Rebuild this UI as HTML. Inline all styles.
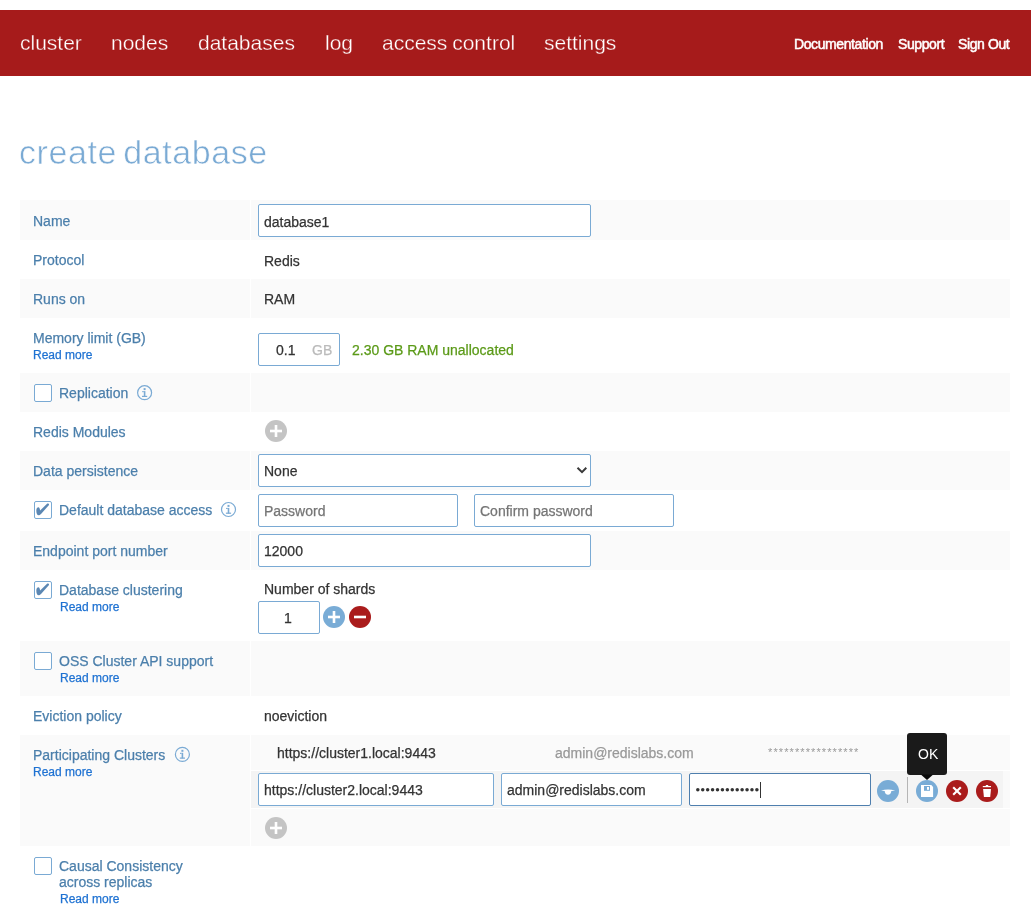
<!DOCTYPE html>
<html><head><meta charset="utf-8">
<style>
*{margin:0;padding:0;box-sizing:border-box}
html,body{width:1031px;height:905px;overflow:hidden;background:#fff;font-family:"Liberation Sans",sans-serif}
.a,.nav,.rnav,.title,.lb,.rm,.vt{will-change:transform}
.lb,.vt,.rm{-webkit-text-stroke:0.25px currentColor}
.a{position:absolute;white-space:nowrap}
.hdr{position:absolute;left:0;top:10px;width:1031px;height:66px;background:#a61b1b}
.nav{position:absolute;top:32px;font-size:21px;line-height:21px;color:#fff;-webkit-text-stroke:0.3px #a61b1b}
.rnav{position:absolute;top:37px;font-size:14px;line-height:14px;color:#fff;letter-spacing:-0.4px;-webkit-text-stroke:0.5px #fff}
.title{position:absolute;left:18.5px;top:134.5px;font-size:34px;line-height:34px;color:#7aaad4;letter-spacing:0.6px;word-spacing:-4px;-webkit-text-stroke:0.6px #fff}
.row{position:absolute;left:20px;width:990px}
.g{background:#fafafa}
.g:after{content:"";position:absolute;left:230px;top:0;bottom:0;width:1px;background:#fff}
.lb{position:absolute;font-size:14px;line-height:14px;color:#4b7fab}
.rm{position:absolute;font-size:12px;line-height:12px;color:#1f72d2}
.vt{position:absolute;font-size:14px;line-height:14px;color:#333}
.inp{position:absolute;background:#fff;border:1px solid #7aaad4;border-radius:2px}
.cb{position:absolute;left:34px;width:18px;height:18px;border:1px solid #7aaad4;border-radius:2px;background:#fff}
svg{position:absolute;overflow:visible}
</style></head><body>
<div class="hdr"></div>
<div class="nav" style="left:20px">cluster</div>
<div class="nav" style="left:111px">nodes</div>
<div class="nav" style="left:198px">databases</div>
<div class="nav" style="left:325px">log</div>
<div class="nav" style="left:382px;word-spacing:-1px">access control</div>
<div class="nav" style="left:544px">settings</div>
<div class="rnav" style="left:794px">Documentation</div>
<div class="rnav" style="left:898px">Support</div>
<div class="rnav" style="left:958px">Sign Out</div>

<div class="title">create database</div>

<!-- rows -->
<div class="row g" style="top:200px;height:40px"></div>
<div class="row g" style="top:279px;height:39px"></div>
<div class="row g" style="top:373px;height:39px"></div>
<div class="row g" style="top:451px;height:39px"></div>
<div class="row g" style="top:531px;height:39px"></div>
<div class="row g" style="top:641px;height:55px"></div>
<div class="row g" style="top:735px;height:111px"></div>

<!-- labels: top = baseline - 12 -->
<div class="a lb" style="left:33px;top:214px">Name</div>
<div class="a lb" style="left:33px;top:253px">Protocol</div>
<div class="a lb" style="left:33px;top:292px">Runs on</div>
<div class="a lb" style="left:33px;top:331px">Memory limit (GB)</div>
<div class="a rm" style="left:33px;top:349px">Read more</div>
<div class="cb" style="top:384px"></div>
<div class="a lb" style="left:59px;top:386px">Replication</div>
<div class="a lb" style="left:33px;top:425px">Redis Modules</div>
<div class="a lb" style="left:33px;top:464px">Data persistence</div>
<div class="cb" style="top:501px"></div>
<div class="a lb" style="left:59px;top:503px">Default database access</div>
<div class="a lb" style="left:33px;top:544px">Endpoint port number</div>
<div class="cb" style="top:581px"></div>
<div class="a lb" style="left:59px;top:583px">Database clustering</div>
<div class="a rm" style="left:60px;top:601px">Read more</div>
<div class="cb" style="top:652px"></div>
<div class="a lb" style="left:59px;top:654px">OSS Cluster API support</div>
<div class="a rm" style="left:60px;top:672px">Read more</div>
<div class="a lb" style="left:33px;top:709px">Eviction policy</div>
<div class="a lb" style="left:33px;top:748px">Participating Clusters</div>
<div class="a rm" style="left:33px;top:766px">Read more</div>
<div class="cb" style="top:857px"></div>
<div class="a lb" style="left:59px;top:858px;line-height:16px;white-space:normal;width:150px">Causal Consistency<br>across replicas</div>
<div class="a rm" style="left:60px;top:893px">Read more</div>

<!-- values -->
<div class="inp" style="left:258px;top:204px;width:333px;height:33px"></div>
<div class="a vt" style="left:264px;top:215px">database1</div>
<div class="a vt" style="left:264px;top:254px">Redis</div>
<div class="a vt" style="left:264px;top:292px">RAM</div>
<div class="inp" style="left:258px;top:333px;width:82px;height:33px"></div>
<div class="a vt" style="left:276px;top:343px">0.1</div>
<div class="a vt" style="left:312px;top:343px;color:#bbb">GB</div>
<div class="a vt" style="left:352px;top:343px;color:#5b9a18">2.30 GB RAM unallocated</div>

<div class="inp" style="left:258px;top:454px;width:333px;height:33px"></div>
<div class="a vt" style="left:264px;top:464px">None</div>
<div class="inp" style="left:258px;top:494px;width:200px;height:33px"></div>
<div class="a vt" style="left:264px;top:504px;color:#757575">Password</div>
<div class="inp" style="left:474px;top:494px;width:200px;height:33px"></div>
<div class="a vt" style="left:480px;top:504px;color:#757575">Confirm password</div>
<div class="inp" style="left:258px;top:534px;width:333px;height:33px"></div>
<div class="a vt" style="left:264px;top:544px">12000</div>

<div class="a vt" style="left:264px;top:582px">Number of shards</div>
<div class="inp" style="left:258px;top:601px;width:62px;height:33px"></div>
<div class="a vt" style="left:284px;top:611px">1</div>

<div class="a vt" style="left:264px;top:709px">noeviction</div>

<div class="a vt" style="left:277px;top:746px">https://cluster1.local:9443</div>
<div class="a vt" style="left:555px;top:746px;color:#999">admin@redislabs.com</div>
<div class="a vt" style="left:768px;top:745px;color:#999;font-size:11px;letter-spacing:1.1px;-webkit-text-stroke:0">*****************</div>
<div class="a" style="left:251px;top:770px;width:759px;height:1px;background:#fff"></div><div class="a" style="left:251px;top:771px;width:752px;height:37px;background:#f4f4f4"></div><div class="a" style="left:251px;top:808px;width:759px;height:1px;background:#fff"></div>
<div class="inp" style="left:258px;top:773px;width:236px;height:33px"></div>
<div class="a vt" style="left:264px;top:783px">https://cluster2.local:9443</div>
<div class="inp" style="left:501px;top:773px;width:181px;height:33px"></div>
<div class="a vt" style="left:507px;top:783px">admin@redislabs.com</div>
<div class="inp" style="left:689px;top:773px;width:182px;height:33px;border-color:#4f7fae"></div>

<svg width="1031" height="905" viewBox="0 0 1031 905" style="left:0;top:0">
<g fill="#5b87b3">
<path transform="translate(34,501)" d="M2.3 9.5 C2.3 7.2 3.5 6.2 4.4 6.2 C5.4 6.2 5.9 7.5 6.1 9.6 L12.8 3 C13.8 2.1 15.3 2.6 15 4.1 L7 13 C6.1 14 5.3 14.3 4.6 14.3 C3.2 14.3 2.3 12.2 2.3 9.5 Z"/>
<path transform="translate(34,581)" d="M2.3 9.5 C2.3 7.2 3.5 6.2 4.4 6.2 C5.4 6.2 5.9 7.5 6.1 9.6 L12.8 3 C13.8 2.1 15.3 2.6 15 4.1 L7 13 C6.1 14 5.3 14.3 4.6 14.3 C3.2 14.3 2.3 12.2 2.3 9.5 Z"/>
</g>
<g transform="translate(144.6,392.7)" fill="#7aaad4"><circle r="7" fill="none" stroke="#7aaad4" stroke-width="1.2"/><rect x="-1" y="-4.6" width="2" height="2"/><rect x="-0.8" y="-1.6" width="1.6" height="5.6"/><rect x="-2.4" y="-1.6" width="1.6" height="1.1"/><rect x="-2.6" y="3.1" width="5.2" height="1.2"/></g>
<g transform="translate(228.5,509.5)" fill="#7aaad4"><circle r="7" fill="none" stroke="#7aaad4" stroke-width="1.2"/><rect x="-1" y="-4.6" width="2" height="2"/><rect x="-0.8" y="-1.6" width="1.6" height="5.6"/><rect x="-2.4" y="-1.6" width="1.6" height="1.1"/><rect x="-2.6" y="3.1" width="5.2" height="1.2"/></g>
<g transform="translate(182.4,754.4)" fill="#7aaad4"><circle r="7" fill="none" stroke="#7aaad4" stroke-width="1.2"/><rect x="-1" y="-4.6" width="2" height="2"/><rect x="-0.8" y="-1.6" width="1.6" height="5.6"/><rect x="-2.4" y="-1.6" width="1.6" height="1.1"/><rect x="-2.6" y="3.1" width="5.2" height="1.2"/></g>
<g transform="translate(276,431)"><circle r="11" fill="#c4c4c4"/><rect x="-6" y="-1.3" width="12" height="2.6" fill="#fff"/><rect x="-1.3" y="-6" width="2.6" height="12" fill="#fff"/></g>
<g transform="translate(276,828)"><circle r="11" fill="#c4c4c4"/><rect x="-6" y="-1.3" width="12" height="2.6" fill="#fff"/><rect x="-1.3" y="-6" width="2.6" height="12" fill="#fff"/></g>
<g transform="translate(334,617)"><circle r="11" fill="#79acd6"/><rect x="-6" y="-1.3" width="12" height="2.6" fill="#fff"/><rect x="-1.3" y="-6" width="2.6" height="12" fill="#fff"/></g>
<g transform="translate(360,617)"><circle r="11" fill="#aa1c1c"/><rect x="-6" y="-1.3" width="12" height="2.6" fill="#fff"/></g>
<path d="M577.5 467.8 L582 472.1 L586.3 467.8" fill="none" stroke="#3a3a3a" stroke-width="2"/>
<!-- participating icons -->
<g transform="translate(888,791)"><circle r="11" fill="#79acd6"/><path d="M-7 -0.6 Q0 -2.6 7.2 -0.6 Q0 1.0 -7 -0.6 Z" fill="#fff"/><path d="M-3.4 -0.8 C-3.4 5.4 3.4 5.4 3.4 -0.8 Z" fill="#fff"/></g>
<rect x="907" y="777" width="1" height="26" fill="#b5b5b5"/>
<g transform="translate(927,791)"><circle r="11" fill="#79acd6"/><path d="M-6 -6 H4.3 L6.1 -4 V6 H-6 Z" fill="#fff"/><rect x="-3" y="-5" width="6" height="4.8" fill="#79acd6"/><rect x="0" y="-4" width="2" height="2.8" fill="#fff"/></g>
<g transform="translate(957,791)"><circle r="11" fill="#aa1c1c"/><path d="M-3.8 -3.8 L3.8 3.8 M3.8 -3.8 L-3.8 3.8" stroke="#fff" stroke-width="2.1"/></g>
<g transform="translate(987,791)"><circle r="11" fill="#aa1c1c"/><rect x="-1.2" y="-6" width="2.4" height="1.3" fill="#fff"/><rect x="-4.2" y="-5" width="8.2" height="1.2" fill="#fff"/><path d="M-3.9 -2.1 H4 L3.2 6 H-3.1 Z" fill="#fff"/></g>
<!-- tooltip -->
<rect x="907" y="733" width="40" height="42" rx="3" fill="#1a1a1a"/>
<path d="M920.8 774.5 L927 780 L933.2 774.5 Z" fill="#0a0a0a"/>
<!-- password dots -->
<g fill="#333"><circle cx="697.80" cy="789.7" r="1.75"/><circle cx="702.72" cy="789.7" r="1.75"/><circle cx="707.65" cy="789.7" r="1.75"/><circle cx="712.57" cy="789.7" r="1.75"/><circle cx="717.50" cy="789.7" r="1.75"/><circle cx="722.42" cy="789.7" r="1.75"/><circle cx="727.35" cy="789.7" r="1.75"/><circle cx="732.27" cy="789.7" r="1.75"/><circle cx="737.20" cy="789.7" r="1.75"/><circle cx="742.12" cy="789.7" r="1.75"/><circle cx="747.05" cy="789.7" r="1.75"/><circle cx="751.97" cy="789.7" r="1.75"/><circle cx="756.90" cy="789.7" r="1.75"/></g>
<rect x="760" y="782" width="1" height="16" fill="#333"/>
</svg>
<div class="a" style="left:918px;top:747px;font-size:14px;line-height:14px;color:#fff">OK</div>
</body></html>
